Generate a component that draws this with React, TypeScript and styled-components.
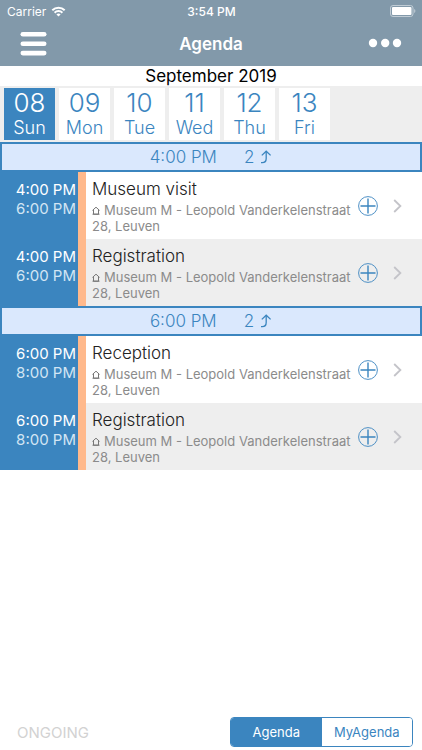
import React, { useState } from "react";
import styled, { createGlobalStyle } from "styled-components";

const blue = "#3b85bf";

const GlobalStyle = createGlobalStyle`
  *, *::before, *::after { box-sizing: border-box; }
  body {
    margin: 0;
    background: #fff;
    font-family: Inter, "Liberation Sans", sans-serif;
  }
  button { font: inherit; padding: 0; margin: 0; border: 0; background: none; cursor: pointer; }
  svg { display: block; }
  h1, h2, h3, p { margin: 0; font-weight: 400; }
`;

const Page = styled.div`
  display: flex;
  flex-direction: column;
  min-height: 100vh;
`;

const Header = styled.header`
  background: #8299aa;
  color: #fff;
`;

const StatusBar = styled.div`
  display: grid;
  grid-template-columns: 1fr auto 1fr;
  align-items: center;
  height: 22px;
  padding: 0 6px 0 7px;
  font-size: 12px;
`;

const Carrier = styled.span`
  display: flex;
  align-items: center;
  gap: 5px;
`;

const Clock = styled.span`
  font-weight: 500;
`;

const BatterySlot = styled.span`
  justify-self: end;
`;

const NavBar = styled.div`
  display: grid;
  grid-template-columns: 1fr auto 1fr;
  align-items: center;
  height: 44px;
  padding: 0 20px;
`;

const Title = styled.h1`
  && { font-weight: 600; }
  font-size: 17px;
  line-height: 22px;
`;

const NavButton = styled.button<{ $end?: boolean }>`
  color: #fff;
  justify-self: ${(p) => (p.$end ? "end" : "start")};
`;

const Month = styled.h2`
  font-size: 17px;
  line-height: 20px;
  text-align: center;
  color: #000;
`;

const DayStrip = styled.nav`
  display: flex;
  gap: 4px;
  padding: 2px 4px;
  background: #eee;
  overflow-x: auto;
`;

const Day = styled.button<{ $active: boolean }>`
  flex: 0 0 51px;
  height: 52px;
  display: flex;
  flex-direction: column;
  align-items: center;
  padding-top: 1px;
  background: ${(p) => (p.$active ? blue : "#fff")};
  color: ${(p) => (p.$active ? "#fff" : blue)};
`;

const DayNumber = styled.span`
  font-size: 26px;
  font-weight: 300;
  line-height: 28px;
`;

const DayName = styled.span`
  font-size: 18px;
  font-weight: 300;
  line-height: 22px;
`;

const Band = styled.h2`
  && { font-weight: 300; }
  display: flex;
  justify-content: center;
  align-items: center;
  gap: 27px;
  height: 30px;
  border: 2px solid ${blue};
  background: #dae8fd;
  color: ${blue};
  font-size: 17px;
`;

const BandCount = styled.span`
  display: flex;
  align-items: center;
  gap: 6px;
`;

const Rows = styled.ul`
  list-style: none;
  margin: 0;
  padding: 0;
`;

const Row = styled.li`
  display: flex;
  align-items: stretch;
  min-height: 67px;
  background: #fff;
  &:nth-child(even) { background: #eee; }
`;

const Times = styled.div`
  flex: 0 0 86px;
  padding: 8px 2px 0 0;
  border-right: 8px solid #ffb98c;
  background: ${blue};
  color: #fff;
  font-size: 15px;
  line-height: 19px;
  text-align: right;
  white-space: nowrap;
`;

const EndTime = styled.div`
  color: #d3e5f4;
`;

const Details = styled.div`
  flex: 1;
  min-width: 0;
  padding: 7px 0 0 6px;
`;

const EventTitle = styled.h3`
  && { font-weight: 300; }
  font-size: 17px;
  line-height: 21px;
  color: #222;
`;

const Place = styled.p`
  padding-top: 2px;
  font-size: 13px;
  line-height: 16px;
  color: #8b8b8b;
  svg { display: inline-block; margin-right: 4px; }
`;

const RowActions = styled.div`
  flex: none;
  display: flex;
  align-items: center;
  gap: 15px;
  padding: 0 20px 0 4px;
`;

const Footer = styled.footer`
  margin-top: auto;
  display: flex;
  align-items: center;
  justify-content: space-between;
  padding: 0 9px 3px 17px;
`;

const Ongoing = styled.button`
  color: #d2d2d2;
  font-size: 15px;
`;

const Segments = styled.div`
  display: flex;
  width: 183px;
  height: 30px;
  border: 1px solid ${blue};
  border-radius: 4px;
  overflow: hidden;
`;

const Segment = styled.button<{ $active: boolean }>`
  flex: 1;
  font-size: 13px;
  background: ${(p) => (p.$active ? blue : "#fff")};
  color: ${(p) => (p.$active ? "#fff" : blue)};
`;

const WifiIcon = () => (
  <svg width="15" height="11" viewBox="0 0 14 11" fill="none" stroke="#fff" strokeWidth="2" aria-hidden="true">
    <path d="M0.8 4.2a8.9 8.9 0 0 1 12.4 0" />
    <path d="M3.1 6.7a5.6 5.6 0 0 1 7.8 0" />
    <path d="M7 10.6 4.9 8.5a3 3 0 0 1 4.2 0z" fill="#fff" stroke="none" />
  </svg>
);

const BatteryIcon = () => (
  <svg width="26" height="12" viewBox="0 0 26 12" aria-hidden="true">
    <rect x="0.5" y="0.5" width="22.5" height="11" rx="2.5" fill="none" stroke="#c0ccd5" />
    <rect x="2" y="2" width="19.5" height="8" rx="1" fill="#fff" />
    <path d="M24.2 4v4c1.6-.6 1.6-3.4 0-4z" fill="#c0ccd5" />
  </svg>
);

const MenuIcon = () => (
  <svg width="27" height="24" viewBox="0 0 27 24" fill="#fff" aria-hidden="true">
    <rect x="0.5" y="0" width="26" height="4.6" rx="2.3" />
    <rect x="0.5" y="9.4" width="26" height="4.6" rx="2.3" />
    <rect x="0.5" y="18.8" width="26" height="4.6" rx="2.3" />
  </svg>
);

const MoreIcon = () => (
  <svg width="34" height="12" viewBox="0 0 34 12" fill="#fff" aria-hidden="true">
    <circle cx="5" cy="5" r="4.2" />
    <circle cx="17.2" cy="5" r="4.2" />
    <circle cx="29" cy="5" r="4.2" />
  </svg>
);

const UpIcon = () => (
  <svg width="12" height="14" viewBox="0 0 12 14" fill="none" stroke={blue} strokeWidth="1.3" aria-hidden="true">
    <path d="M1 12.6h1.2c2.6 0 4-1.7 4-4.2V1.6" />
    <path d="M1.8 5.4 6.2 1.2l4.4 4.2" />
  </svg>
);

const HouseIcon = () => (
  <svg width="8" height="9" viewBox="0 0 8 9" fill="none" stroke="#777" aria-hidden="true">
    <path d="M1.5 3.8v4.4h5V3.8" />
    <path d="M0.5 8.2h7M0.5 4.4 4 1.2l3.5 3.2" />
  </svg>
);

const AddIcon = () => (
  <svg width="20" height="20" viewBox="0 0 20 20" fill="none" stroke={blue} aria-hidden="true">
    <circle cx="10" cy="10" r="9.4" strokeWidth="0.9" />
    <path d="M10 2.5v15M2.5 10h15" strokeWidth="1.4" />
  </svg>
);

const ChevronIcon = () => (
  <svg width="9" height="14" viewBox="0 0 9 14" fill="none" stroke="#c4c4c9" strokeWidth="1.8" aria-hidden="true">
    <path d="M1.2 1 7.4 7l-6.2 6" />
  </svg>
);

const days = [
  ["08", "Sun"],
  ["09", "Mon"],
  ["10", "Tue"],
  ["11", "Wed"],
  ["12", "Thu"],
  ["13", "Fri"],
];

const place = "Museum M - Leopold Vanderkelenstraat 28, Leuven";

const groups = [
  { start: "4:00 PM", end: "6:00 PM", events: ["Museum visit", "Registration"] },
  { start: "6:00 PM", end: "8:00 PM", events: ["Reception", "Registration"] },
];

export default function App() {
  const [day, setDay] = useState("08");
  const [tab, setTab] = useState("Agenda");

  return (
    <Page>
      <GlobalStyle />
      <Header>
        <StatusBar>
          <Carrier>Carrier <WifiIcon /></Carrier>
          <Clock>3:54 PM</Clock>
          <BatterySlot><BatteryIcon /></BatterySlot>
        </StatusBar>
        <NavBar>
          <NavButton aria-label="Menu"><MenuIcon /></NavButton>
          <Title>Agenda</Title>
          <NavButton $end aria-label="More"><MoreIcon /></NavButton>
        </NavBar>
      </Header>
      <Month>September 2019</Month>
      <DayStrip aria-label="Days">
        {days.map(([number, name]) => (
          <Day key={number} $active={day === number} aria-pressed={day === number} onClick={() => setDay(number)}>
            <DayNumber>{number}</DayNumber>
            <DayName>{name}</DayName>
          </Day>
        ))}
      </DayStrip>
      <main>
        {groups.map((group) => (
          <section key={group.start}>
            <Band>
              <span>{group.start}</span>
              <BandCount>{group.events.length} <UpIcon /></BandCount>
            </Band>
            <Rows>
              {group.events.map((event) => (
                <Row key={event}>
                  <Times>
                    <div>{group.start}</div>
                    <EndTime>{group.end}</EndTime>
                  </Times>
                  <Details>
                    <EventTitle>{event}</EventTitle>
                    <Place><HouseIcon />{place}</Place>
                  </Details>
                  <RowActions>
                    <button aria-label={`Add ${event}`}><AddIcon /></button>
                    <button aria-label={`Open ${event}`}><ChevronIcon /></button>
                  </RowActions>
                </Row>
              ))}
            </Rows>
          </section>
        ))}
      </main>
      <Footer>
        <Ongoing>ONGOING</Ongoing>
        <Segments>
          {["Agenda", "MyAgenda"].map((name) => (
            <Segment key={name} $active={tab === name} aria-pressed={tab === name} onClick={() => setTab(name)}>
              {name}
            </Segment>
          ))}
        </Segments>
      </Footer>
    </Page>
  );
}
